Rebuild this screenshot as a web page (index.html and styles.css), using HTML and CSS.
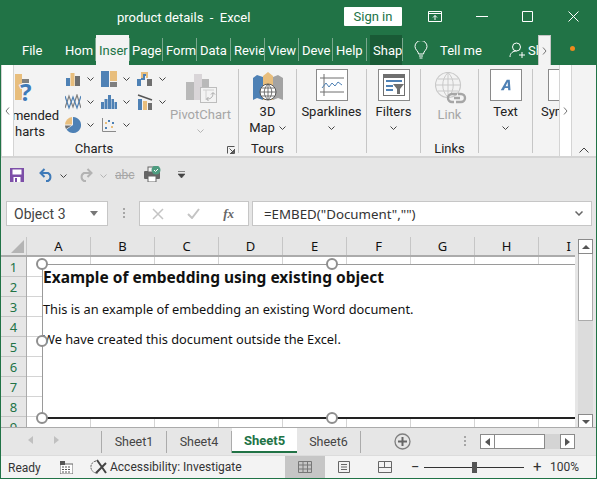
FILE: index.html
```html
<!DOCTYPE html>
<html lang="en">
<head>
  <meta charset="UTF-8" />
  <title>product details - Excel</title>
  <link rel="stylesheet" href="styles.css">
</head>
<body>
<div class="window">

  <!-- title bar -->
  <div class="titlebar">
    <span class="doc-title">product details&nbsp; -&nbsp; Excel</span>
    <button class="signin">Sign in</button>
    <svg class="win-upload" width="14" height="11" viewBox="0 0 14 11"><path d="M.5.5h13v10H.5zM.5 2.500h13M7 9V4.500M5 6.500l2-2 2 2" fill="none" stroke="#fff"/></svg>
    <svg class="win-min" width="12" height="1" viewBox="0 0 12 1"><path d="M0 .5h12" stroke="#fff"/></svg>
    <svg class="win-max" width="11" height="11" viewBox="0 0 11 11"><path d="M.5.5h10v10H.5z" fill="none" stroke="#fff"/></svg>
    <svg class="win-close" width="11" height="11" viewBox="0 0 11 11"><path d="M.5.5l10 10M10.500.5l-10 10" stroke="#fff"/></svg>
  </div>

  <!-- tabs -->
  <div class="tabs">
    <div class="tab tab-file">File</div>
    <div class="tab">Hom</div>
    <div class="tab tab-active">Inser</div>
    <div class="tab">Page</div>
    <div class="tab">Form</div>
    <div class="tab">Data</div>
    <div class="tab">Revie</div>
    <div class="tab">View</div>
    <div class="tab">Deve</div>
    <div class="tab">Help</div>
    <div class="tab tab-shape">Shap</div>
    <svg class="bulb" width="14" height="18" viewBox="0 0 14 18"><path d="M4.500 13c0-3-3.500-4-3.500-7.500a6 6 0 0 1 12 0C13 9 9.500 10 9.500 13zM5 15h4M5.500 17h3" fill="none" stroke="#fff"/></svg>
    <span class="tellme">Tell me</span>
    <svg class="person" width="17" height="17" viewBox="0 0 17 17"><circle cx="7.500" cy="5" r="4" fill="none" stroke="#fff"/><path d="M1 15c0-4 3-6 6.500-6M13 10v6M10 13h6" fill="none" stroke="#fff"/></svg>
    <span class="share">Sh</span>
    <div class="tab-more"><svg width="5" height="8" viewBox="0 0 5 8"><path d="M1 .5 4 4 1 7.500" fill="none" stroke="#777"/></svg></div>
    <span class="orange-dot"></span>
  </div>

  <!-- ribbon -->
  <div class="ribbon">
    <div class="groups">

      <div class="group group-charts">
        <div class="group-items">
          <div class="big-btn btn-rec">
            <svg class="rec-icon" width="21" height="32" viewBox="11 0 21 32"><rect x="12" y="1" width="7" height="26" fill="#e8be7d"/><rect x="19" y="6" width="7" height="4" fill="#7f7f7f"/><text x="17" y="28" class="rec-q">?</text></svg>
            <span class="rec-l1">mended</span>
            <span class="rec-l2">harts</span>
          </div>
          <div class="chart-grid">
            <div class="chart-item">
              <svg width="16" height="16" viewBox="0 0 16 16"><rect x="1" y="7" width="4" height="8" fill="#4e81b5"/><rect x="5.500" y="2" width="4" height="13" fill="#e8be7d"/><rect x="10" y="5" width="5" height="10" fill="#6f6f6f"/></svg>
              <svg class="chev" width="7" height="4" viewBox="0 0 7 4"><path d="M.5.500l3 3 3-3" fill="none" stroke="#444"/></svg>
            </div>
            <div class="chart-item">
              <svg width="16" height="16" viewBox="0 0 16 16"><rect x="0" y="0" width="8" height="16" fill="#4e81b5"/><rect x="9" y="0" width="7" height="10" fill="#e8be7d"/><rect x="9" y="11" width="7" height="5" fill="#7f7f7f"/></svg>
              <svg class="chev" width="7" height="4" viewBox="0 0 7 4"><path d="M.5.500l3 3 3-3" fill="none" stroke="#444"/></svg>
            </div>
            <div class="chart-item">
              <svg width="16" height="16" viewBox="0 0 16 16"><path d="M0 15V8h4v7z" fill="#4e81b5"/><path d="M5 8V2h5v5" fill="none" stroke="#e8be7d" stroke-width="2"/><path d="M10 15V8h5v7z" fill="#6f6f6f"/><path d="M4 8h3V4h2" fill="none" stroke="#4e81b5" stroke-width="2"/></svg>
              <svg class="chev" width="7" height="4" viewBox="0 0 7 4"><path d="M.5.500l3 3 3-3" fill="none" stroke="#444"/></svg>
            </div>
            <div class="chart-item">
              <svg width="16" height="16" viewBox="0 0 16 16"><path d="M0 14 4 2l4 11 4-12 4 13" fill="none" stroke="#7f7f7f" stroke-width="1.200"/><path d="M0 2l4 12 4-11 4 11 4-12" fill="none" stroke="#4e81b5" stroke-width="1.200"/></svg>
              <svg class="chev" width="7" height="4" viewBox="0 0 7 4"><path d="M.5.500l3 3 3-3" fill="none" stroke="#444"/></svg>
            </div>
            <div class="chart-item">
              <svg width="16" height="16" viewBox="0 0 16 16"><rect x="0" y="8" width="3" height="7" fill="#4e81b5"/><rect x="3.500" y="5" width="3" height="10" fill="#4e81b5"/><rect x="7" y="1" width="3" height="14" fill="#4e81b5"/><rect x="10.500" y="5" width="2.500" height="10" fill="#4e81b5"/><rect x="13.500" y="8" width="2.500" height="7" fill="#4e81b5"/></svg>
              <svg class="chev" width="7" height="4" viewBox="0 0 7 4"><path d="M.5.500l3 3 3-3" fill="none" stroke="#444"/></svg>
            </div>
            <div class="chart-item">
              <svg width="16" height="16" viewBox="0 0 16 16"><rect x="1" y="5" width="4" height="11" fill="#4e81b5"/><rect x="6" y="7" width="4" height="9" fill="#e8be7d"/><rect x="11" y="9" width="4" height="7" fill="#6f6f6f"/><path d="M1 1l14 5" stroke="#555" stroke-width="1.500"/></svg>
              <svg class="chev" width="7" height="4" viewBox="0 0 7 4"><path d="M.5.500l3 3 3-3" fill="none" stroke="#444"/></svg>
            </div>
            <div class="chart-item">
              <svg width="16" height="16" viewBox="0 0 16 16"><path d="M8 0a8 8 0 1 1-6.500 12.600L8 8z" fill="#4e81b5"/><path d="M0 7.500A8 8 0 0 1 7 0v7.500z" fill="#e8be7d"/><path d="M0 8.500h6.500L1 12A8 8 0 0 1 0 8.500z" fill="#6f6f6f"/></svg>
              <svg class="chev" width="7" height="4" viewBox="0 0 7 4"><path d="M.5.500l3 3 3-3" fill="none" stroke="#444"/></svg>
            </div>
            <div class="chart-item">
              <svg width="16" height="16" viewBox="0 0 16 16"><path d="M1.500 1v13.500H15" fill="none" stroke="#8a8a8a"/><path d="M4 5h2v2H4zM10 9h2v2h-2z" fill="#e8be7d"/><path d="M7 3h2v2H7zM4 10h2v2H4zM11 5h2v2h-2z" fill="#4e81b5"/></svg>
              <svg class="chev" width="7" height="4" viewBox="0 0 7 4"><path d="M.5.500l3 3 3-3" fill="none" stroke="#444"/></svg>
            </div>
          </div>
          <div class="big-btn btn-pivot is-off">
            <svg class="pivot-icon" width="31" height="30" viewBox="0 0 31 30"><rect x="0" y="9" width="8" height="18" fill="#b9b9b9"/><rect x="8" y="1" width="8" height="26" fill="#d9d5d8"/><rect x="16" y="6" width="7" height="21" fill="#b9b9b9"/><rect x="14.500" y="14.500" width="16" height="15" fill="#f3f3f3" stroke="#bdbdbd"/><path d="M17 17h11M20 17v10" stroke="#d0d0d0"/><path d="M21 26c4 0 6-2 6-6M25 21.500l2-2 2 2M22.500 24l-2 2 2 2" fill="none" stroke="#a8a8a8"/></svg>
            <span>PivotChart</span>
            <svg class="chev" width="7" height="4" viewBox="0 0 7 4"><path d="M.5.500l3 3 3-3" fill="none" stroke="#b5b5b5"/></svg>
          </div>
        </div>
        <div class="group-label label-charts">Charts
          <svg class="launcher" width="8" height="8" viewBox="0 0 8 8"><path d="M.5 7.500v-7h7M7.500 3v4.500H3M2.500 2.500l4 4M6.500 4v2.500H4" fill="none" stroke="#555"/></svg>
        </div>
      </div>

      <div class="group group-tours">
        <div class="group-items">
          <div class="big-btn">
            <svg class="map-icon" width="30" height="29" viewBox="0 0 30 29"><path d="M0 6l4-3 6 2v23l-6-2-4 2z" fill="#4e81b5"/><path d="M10 4l5-4 5 4v24H10z" fill="#e8be7d"/><path d="M20 5l5-2 5 3v22l-5-2-5 2z" fill="#a3a3a3"/><circle cx="15" cy="20" r="8" fill="#fff" stroke="#555"/><path d="M7 20h16M8.500 16h13M8.500 24h13M15 12v16M15 12c-5 5-5 11 0 16M15 12c5 5 5 11 0 16" fill="none" stroke="#555" stroke-width=".8"/></svg>
            <span>3D</span>
            <span class="with-chev">Map <svg class="chev" width="7" height="4" viewBox="0 0 7 4"><path d="M.5.500l3 3 3-3" fill="none" stroke="#444"/></svg></span>
          </div>
        </div>
        <div class="group-label">Tours</div>
      </div>

      <div class="group group-spark">
        <div class="group-items">
          <div class="big-btn btn-box">
            <div class="icon-box">
              <svg width="24" height="22" viewBox="0 0 24 22"><path d="M4 0v22M0 4h24M0 18h24" fill="none" stroke="#6f6f6f"/><path d="M2 14l4-5 3 4 3-4 3 3 3-4 4 3" fill="none" stroke="#4e81b5"/></svg>
            </div>
            <span class="box-text">Sparklines</span>
            <svg class="chev" width="7" height="4" viewBox="0 0 7 4"><path d="M.5.500l3 3 3-3" fill="none" stroke="#444"/></svg>
          </div>
        </div>
      </div>

      <div class="group group-filter">
        <div class="group-items">
          <div class="big-btn btn-box">
            <div class="icon-box">
              <svg width="22" height="22" viewBox="0 0 22 22"><rect x=".5" y=".5" width="21" height="21" fill="#fff" stroke="#6f6f6f"/><rect x="0" y="0" width="22" height="4" fill="#6f6f6f"/><path d="M3 7h16" stroke="#4e81b5" stroke-width="2"/><path d="M3 12h7M3 16h7" stroke="#4e81b5" stroke-width="2"/><path d="M10 10h11l-4 5v5h-3v-5z" fill="#6f6f6f"/></svg>
            </div>
            <span class="box-text">Filters</span>
            <svg class="chev" width="7" height="4" viewBox="0 0 7 4"><path d="M.5.500l3 3 3-3" fill="none" stroke="#444"/></svg>
          </div>
        </div>
      </div>

      <div class="group group-links">
        <div class="group-items">
          <div class="big-btn is-off">
            <svg class="link-icon" width="32" height="32" viewBox="0 0 32 32"><circle cx="13" cy="13" r="12.500" fill="#f3f3f3" stroke="#c9c9c9" stroke-width="1.200"/><path d="M.5 13h25M3 7h20M3 19h20M13 .5v25M13 .5c-7 7-7 18 0 25M13 .5c7 7 7 18 0 25" fill="none" stroke="#c9c9c9"/><path d="M19 30h-2a4 4 0 0 1 0-8h5M23 22h3a4 4 0 0 1 0 8h-5M19 26h6" fill="none" stroke="#a6a6a6" stroke-width="2.400"/></svg>
            <span>Link</span>
          </div>
        </div>
        <div class="group-label">Links</div>
      </div>

      <div class="group group-text">
        <div class="group-items">
          <div class="big-btn btn-box">
            <div class="icon-box">
              <svg width="12" height="12" viewBox="0 0 16 16"><path d="M1 15 9 1h4l1 14h-3l-.300-3H6.500l-1.500 3zM7.500 9.500h3L10.200 4z" fill="#4e81b5" fill-rule="evenodd"/></svg>
            </div>
            <span class="box-text">Text</span>
            <svg class="chev" width="7" height="4" viewBox="0 0 7 4"><path d="M.5.500l3 3 3-3" fill="none" stroke="#444"/></svg>
          </div>
        </div>
      </div>

      <div class="group group-sym">
        <div class="icon-box sym-box"></div>
        <span class="box-text sym-text">Sym</span>
      </div>
    </div>

    <div class="ribbon-strip strip-left"><svg width="5" height="8" viewBox="0 0 5 8"><path d="M4 .5 1 4l3 3.500" fill="none" stroke="#777"/></svg></div>
    <div class="ribbon-strip strip-right"><svg width="5" height="8" viewBox="0 0 5 8"><path d="M1 .5 4 4 1 7.500" fill="none" stroke="#777"/></svg></div>
    <svg class="ribbon-collapse" width="10" height="6" viewBox="0 0 10 6"><path d="M.5 5.500 5 1l4.500 4.500" fill="none" stroke="#444"/></svg>
  </div>

  <!-- quick access -->
  <div class="qat">
    <svg class="qat-save" width="14" height="14" viewBox="0 0 14 14"><path d="M0 0h14v14H0z" fill="#7d4fa8"/><rect x="2.500" y="1.500" width="9" height="5" fill="#fff"/><rect x="3.500" y="9" width="7" height="5" fill="#fff"/><rect x="5" y="10" width="2" height="4" fill="#7d4fa8"/></svg>
    <svg class="qat-undo" width="15" height="14" viewBox="0 0 15 14"><path d="M5.500 1 1.500 5l4 4M2 5h7a4.500 4.500 0 0 1 0 8H7" fill="none" stroke="#3f7ab8" stroke-width="2"/></svg>
    <svg class="chev qat-c1" width="7" height="4" viewBox="0 0 7 4"><path d="M.5.500l3 3 3-3" fill="none" stroke="#444"/></svg>
    <svg class="qat-redo" width="15" height="14" viewBox="0 0 15 14"><path d="M9.500 1l4 4-4 4M13 5H6a4.500 4.500 0 0 0 0 8h2" fill="none" stroke="#b3b3b3" stroke-width="2"/></svg>
    <svg class="chev qat-c2" width="7" height="4" viewBox="0 0 7 4"><path d="M.5.500l3 3 3-3" fill="none" stroke="#b3b3b3"/></svg>
    <span class="qat-abc">abc</span>
    <svg class="qat-print" width="17" height="16" viewBox="0 0 17 16"><rect x="0" y="5" width="16" height="8" rx="1" fill="#666"/><rect x="4" y="1" width="7" height="5" fill="#f3f3f3" stroke="#666"/><rect x="4" y="10" width="8" height="6" fill="#fff" stroke="#666"/><circle cx="12" cy="4" r="4.500" fill="#4f9c80"/><path d="M10 4l1.500 1.500L14 3" fill="none" stroke="#fff"/></svg>
    <svg class="qat-custom" width="7" height="7" viewBox="0 0 7 7"><path d="M0 .5h7M0 3h7l-3.500 4z" fill="#444" stroke="#444" stroke-width=".6"/></svg>
  </div>

  <!-- formula bar -->
  <div class="formula-row">
    <div class="name-box"><span>Object 3</span><i class="caret-down"></i></div>
    <div class="grip"></div>
    <div class="fx-box">
      <svg width="12" height="12" viewBox="0 0 12 12"><path d="M1 1l10 10M11 1 1 11" stroke="#c4c4c4" stroke-width="1.500"/></svg>
      <svg width="13" height="11" viewBox="0 0 13 11"><path d="M1 6l4 4 7-9" fill="none" stroke="#c4c4c4" stroke-width="2"/></svg>
      <span class="fx">fx</span>
    </div>
    <div class="formula-input"><span>=EMBED("Document","")</span>
      <svg width="8" height="5" viewBox="0 0 8 5"><path d="M.5.500 4 4 7.500.5" fill="none" stroke="#666" stroke-width="1.500"/></svg>
    </div>
  </div>

  <!-- sheet -->
  <div class="sheet-area">
    <div class="sheet-main">
      <div class="col-heads">
        <div class="corner"><i></i></div>
        <div class="col">A</div><div class="col">B</div><div class="col">C</div>
        <div class="col">D</div><div class="col">E</div><div class="col">F</div>
        <div class="col">G</div><div class="col">H</div><div class="col col-cut">I</div>
      </div>
      <div class="sheet-body">
        <div class="row-heads">
          <div class="row">1</div><div class="row">2</div><div class="row">3</div>
          <div class="row">4</div><div class="row">5</div><div class="row">6</div>
          <div class="row">7</div><div class="row">8</div><div class="row">9</div>
        </div>
        <div class="cells"></div>
        <div class="ole-object">
          <h2>Example of embedding using existing object</h2>
          <p>This is an example of embedding an existing Word document.</p>
          <p>We have created this document outside the Excel.</p>
          <i class="handle h-tl"></i><i class="handle h-tm"></i><i class="handle h-ml"></i>
          <i class="handle h-bl"></i><i class="handle h-bm"></i>
        </div>
      </div>
    </div>
    <div class="vscroll">
      <div class="sb-btn"><i class="tri-up"></i></div>
      <div class="sb-thumb"></div>
      <div class="sb-track"></div>
      <div class="sb-btn"><i class="tri-down"></i></div>
    </div>
  </div>

  <!-- sheet tabs -->
  <div class="sheet-tabs">
    <div class="tab-nav">
      <i class="tri-left"></i><i class="tri-right"></i>
    </div>
    <div class="stab">Sheet1</div>
    <div class="stab">Sheet4</div>
    <div class="stab stab-active">Sheet5</div>
    <div class="stab stab-last">Sheet6</div>
    <svg class="add-sheet" width="17" height="17" viewBox="0 0 17 17"><circle cx="8.500" cy="8.500" r="7.500" fill="none" stroke="#7f7f7f" stroke-width="1.300"/><path d="M8.500 4v9M4 8.500h9" stroke="#666" stroke-width="2"/></svg>
    <div class="grip grip-tabs"></div>
    <div class="hscroll">
      <div class="sb-btn"><i class="tri-left dark"></i></div>
      <div class="hs-thumb"></div>
      <div class="hs-track"></div>
      <div class="sb-btn"><i class="tri-right dark"></i></div>
    </div>
  </div>

  <!-- status bar -->
  <div class="statusbar">
    <span class="ready">Ready</span>
    <svg class="macro" width="13" height="13" viewBox="0 0 13 13"><rect x="0" y="3" width="13" height="10" fill="#fff" stroke="#666"/><rect x="0" y="0" width="5" height="4" fill="#555"/><path d="M2 6h9M2 8.500h9M2 11h9" stroke="#555" stroke-dasharray="2 1"/></svg>
    <svg class="access" width="17" height="16" viewBox="0 0 17 16"><path d="M6 2a6 6 0 1 0 2 12" fill="none" stroke="#555" stroke-dasharray="2 1"/><path d="M7 1l9 13M16 4 6 14" stroke="#444" stroke-width="2"/></svg>
    <span class="access-text">Accessibility: Investigate</span>
    <div class="view-btn">
      <svg width="14" height="12" viewBox="0 0 14 12"><path d="M.5.500h13v11H.5zM.5 4h13M.5 8h13M5 .5v11M9.500.5v11" fill="none" stroke="#777"/></svg>
    </div>
    <svg class="view-page" width="12" height="12" viewBox="0 0 12 12"><path d="M.5.500h11v11H.5zM3 3.500h6M3 6h6M3 8.500h6" fill="none" stroke="#666"/></svg>
    <svg class="view-break" width="14" height="12" viewBox="0 0 14 12"><path d="M.5.500h13v11H.5zM.5 6.500h13M6.500.5v6" fill="none" stroke="#666"/></svg>
    <span class="zoom-sign zoom-minus">−</span>
    <div class="zoom-track"><i></i></div>
    <span class="zoom-sign zoom-plus">+</span>
    <span class="zoom-pct">100%</span>
  </div>
</div>
</body>
</html>
```

FILE: styles.css
```css
* {
  box-sizing: border-box;
}

body {
  margin: 0;
  overflow: hidden;
  font-family: Roboto, "Noto Sans", Arial, sans-serif;
  font-size: 13px;
  color: #222;
}

svg {
  display: block;
  flex: none;
}

.window {
  width: 597px;
  height: 479px;
  display: flex;
  flex-direction: column;
  background: #e6e6e6;
  border: 1px solid #217346;
  border-top: 0;
  overflow: hidden;
}

/* title bar */
.titlebar {
  height: 35px;
  flex: none;
  display: flex;
  align-items: center;
  background: #217346;
  color: #fff;
}

.doc-title {
  margin-left: 116px;
  width: 227px;
  font-size: 13px;
}

.signin {
  width: 58px;
  height: 19px;
  margin-top: -2px;
  padding: 0;
  border: 0;
  border-radius: 1px;
  background: #fff;
  color: #217346;
  font: 13px Roboto, sans-serif;
}

.win-upload { margin: -3px 0 0 26px; }
.win-min { margin: -3px 0 0 34px; }
.win-max { margin: -3px 0 0 34px; }
.win-close { margin: -3px 0 0 35px; }

/* ribbon tabs */
.tabs {
  height: 30px;
  flex: none;
  display: flex;
  align-items: center;
  background: #217346;
  color: #fff;
}

.tab {
  width: 34px;
  height: 30px;
  padding: 6px 0 0 3px;
  white-space: nowrap;
  font-size: 13px;
  line-height: 19px;
  position: relative;
}

.tab::after {
  content: "";
  position: absolute;
  right: 0;
  top: 3px;
  bottom: 4px;
  width: 1px;
  background: #7aa88e;
}

.tab:first-child::after {
  display: none;
}

.tab-file {
  width: 61px;
  padding-left: 21px;
}

.tab-active {
  background: #f3f3f3;
  color: #217346;
  width: 33px;
}

.tab-active::after {
  right: -1px;
}

.tab-shape {
  width: 32px;
  margin-left: 3px;
  background: #195a36;
}

.tab-shape::after {
  right: -1px;
}

.bulb { margin-left: 12px; }

.tellme {
  margin-left: 12px;
  width: 38px;
  white-space: nowrap;
}

.person { margin-left: 31px; }

.share {
  width: 10px;
  margin-left: 2px;
}

.tab-more {
  width: 13px;
  height: 30px;
  display: flex;
  align-items: center;
  justify-content: center;
  background: #f3f3f3;
  border: 1px solid #c6c6c6;
  border-bottom: 0;
}

.orange-dot {
  width: 5px;
  height: 5px;
  margin: -3px 0 0 19px;
  border-radius: 50%;
  background: #ee8a1d;
}

/* ribbon */
.ribbon {
  height: 93px;
  flex: none;
  position: relative;
  overflow: hidden;
  background: #f3f3f3;
  border-bottom: 2px solid #d4d4d4;
}

.groups {
  display: flex;
  margin-left: 13px;
}

.group {
  height: 84px;
  margin-top: 4px;
  display: flex;
  flex-direction: column;
  flex: none;
  border-right: 1px solid #c6c6c6;
}

.group-items {
  flex: 1;
  display: flex;
}

.group-label {
  height: 16px;
  margin-bottom: -4px;
  position: relative;
  text-align: center;
  line-height: 16px;
}

.label-charts {
  padding-right: 64px;
}

.launcher {
  position: absolute;
  right: 3px;
  top: 5px;
}

.group-charts { width: 225px; }
.group-tours { width: 58px; }
.group-spark { width: 70px; }
.group-filter { width: 54px; }
.group-links { width: 58px; }
.group-text { width: 54px; }
.group-sym { width: 26px; border: 0; }

.big-btn {
  display: flex;
  flex-direction: column;
  align-items: center;
  width: 100%;
  line-height: 16px;
  white-space: nowrap;
}

.btn-rec {
  width: 46px;
}

.rec-icon {
  margin-top: 4px;
  margin-bottom: 3px;
  align-self: flex-start;
}

.rec-l1 {
  align-self: flex-end;
  padding-right: 1px;
}

.rec-l2 {
  align-self: flex-start;
  margin-left: 1px;
}

.rec-q {
  font: bold 24px "Noto Sans", sans-serif;
  fill: #3f7ab8;
  stroke: #f3f3f3;
  stroke-width: 2px;
  paint-order: stroke;
}

.chart-grid {
  width: 108px;
  margin: -2px 0 0 4px;
  display: grid;
  grid-template-columns: repeat(3, 36px);
  grid-template-rows: repeat(3, 23px);
}

.chart-item {
  display: flex;
  align-items: center;
  gap: 6px;
  padding-left: 1px;
}

.btn-pivot {
  width: 57px;
  margin-right: 9px;
}

.pivot-icon {
  margin: 4px 0 4px 2px;
}

.is-off {
  color: #a6a6a6;
}

.btn-pivot .chev {
  margin-top: 6px;
}

.map-icon {
  margin-top: 3px;
  margin-bottom: 3px;
}

.with-chev {
  display: flex;
  align-items: center;
  gap: 4px;
}

.icon-box {
  width: 32px;
  height: 32px;
  flex: none;
  display: flex;
  align-items: center;
  justify-content: center;
  background: #fff;
  border: 1.500px solid #8a8a8a;
}

.box-text {
  margin-top: 3px;
  line-height: 16px;
}

.btn-box .chev {
  margin-top: 6px;
}

.link-icon {
  margin-top: 3px;
  margin-bottom: 3px;
  margin-left: 3px;
}

.sym-box {
  width: 11px;
  margin-left: 15px;
  border-right: 0;
}

.sym-text {
  margin-left: 8px;
}

.ribbon-strip {
  position: absolute;
  top: 0;
  bottom: 0;
  display: flex;
  align-items: center;
  background: #fff;
  justify-content: center;
  width: 13px;
  border: 1px solid #d4d4d4;
  border-top: 0;
  border-bottom: 0;
}

.strip-left { left: 0; }
.strip-right { left: 558px; }

.ribbon-collapse {
  position: absolute;
  left: 578px;
  top: 82px;
}

/* quick access */
.qat {
  height: 43px;
  flex: none;
  display: flex;
  align-items: flex-start;
  padding-top: 10px;
  color: #a6a6a6;
}

.qat-save { margin-left: 9px; }
.qat-undo { margin-left: 15px; }
.qat-c1 { margin: 6px 0 0 6px; }
.qat-redo { margin-left: 11px; }
.qat-c2 { margin: 6px 0 0 7px; }

.qat-abc {
  margin-left: 8px;
  width: 17px;
  font-size: 12px;
  line-height: 14px;
  text-decoration: line-through;
}

.qat-print { margin: -2px 0 0 12px; }
.qat-custom { margin: 3px 0 0 17px; }

/* formula bar */
.formula-row {
  height: 25px;
  flex: none;
  display: flex;
  padding-left: 5px;
}

.name-box {
  width: 102px;
  display: flex;
  align-items: center;
  justify-content: space-between;
  padding: 0 9px 0 7px;
  background: #fff;
  border: 1px solid #c6c6c6;
  color: #444;
  font-size: 14px;
}

.caret-down {
  border: 4px solid transparent;
  border-top: 5px solid #777;
  border-bottom: 0;
}

.grip {
  width: 2px;
  height: 11px;
  margin: 7px 14px 0 15px;
  background: repeating-linear-gradient(#a6a6a6 0 2px, transparent 2px 4px);
}

.fx-box {
  width: 110px;
  display: flex;
  align-items: center;
  justify-content: space-between;
  padding: 0 14px 0 12px;
  background: #fff;
  border: 1px solid #c6c6c6;
}

.fx {
  font: italic bold 13px "Liberation Serif", serif;
  color: #666;
}

.formula-input {
  width: 340px;
  margin-left: 3px;
  display: flex;
  align-items: center;
  justify-content: space-between;
  padding: 0 8px 0 11px;
  background: #fff;
  border: 1px solid #c6c6c6;
  font-family: "Noto Sans", sans-serif;
  font-size: 13.300px;
  color: #333;
}

/* sheet */
.sheet-area {
  flex: 1;
  display: flex;
  margin-top: 11px;
  min-height: 0;
}

.sheet-main {
  width: 574px;
  flex: none;
}

.col-heads {
  height: 20px;
  display: flex;
  border-bottom: 2px solid #ababab;
}

.corner {
  width: 26px;
  flex: none;
  border-right: 1px solid #c6c6c6;
}

.corner i {
  display: block;
  width: 0;
  height: 0;
  margin: 3px 0 0 10px;
  border-left: 13px solid transparent;
  border-bottom: 13px solid #b4b4b4;
}

.col {
  width: 64px;
  flex: none;
  text-align: center;
  line-height: 18px;
  border-right: 1px solid #c6c6c6;
  color: #111;
  font-family: "Noto Sans", sans-serif;
}

.col-cut {
  width: 36px;
  padding-right: 4px;
  text-align: right;
  border: 0;
}

.sheet-body {
  height: 171px;
  display: flex;
  position: relative;
  overflow: hidden;
}

.row-heads {
  width: 26px;
  flex: none;
  border-right: 1px solid #ababab;
  font-family: "Noto Sans", sans-serif;
}

.row {
  height: 20px;
  text-align: center;
  line-height: 20px;
  border-bottom: 1px solid #c6c6c6;
  color: #217346;
  font-size: 13px;
}

.cells {
  flex: 1;
  background-color: #fff;
  background-image:
    linear-gradient(90deg, transparent 63px, #d4d4d4 63px),
    linear-gradient(transparent 19px, #d4d4d4 19px);
  background-size: 64px 20px;
}

.ole-object {
  position: absolute;
  left: 41px;
  top: 7px;
  width: 560px;
  height: 155px;
  background: #fff;
  border-top: 1px solid #9a9a9a;
  border-left: 1px solid #9a9a9a;
  border-bottom: 2px solid #222;
  font-family: "Noto Sans", sans-serif;
  font-size: 12.800px;
  color: #111;
}

.ole-object h2 {
  margin: 0 0 11px;
  font-size: 15.500px;
  line-height: 24px;
}

.ole-object p {
  margin: 0 0 12px;
  line-height: 18px;
}

.handle {
  position: absolute;
  width: 12px;
  height: 12px;
  background: #fff;
  border: 2px solid #8f8f8f;
  border-radius: 50%;
}

.h-tl { left: -7px; top: -7px; }
.h-tm { left: 283px; top: -7px; }
.h-ml { left: -7px; top: 70px; }
.h-bl { left: -7px; top: 147px; }
.h-bm { left: 283px; top: 147px; }

.vscroll {
  width: 15px;
  margin: 2px 0 0 3px;
  display: flex;
  flex-direction: column;
  flex: none;
  height: 190px;
}

.sb-btn {
  width: 15px;
  height: 15px;
  flex: none;
  display: flex;
  align-items: center;
  justify-content: center;
  background: #fff;
  border: 1px solid #8a8a8a;
}

.sb-thumb {
  height: 67px;
  background: #fff;
  border: 1px solid #ababab;
  border-top: 0;
}

.sb-track {
  flex: 1;
  background: #dcdcdc;
}

.tri-up, .tri-down, .tri-left, .tri-right {
  display: block;
  width: 0;
  height: 0;
  border: 4px solid transparent;
}

.tri-up { border-bottom: 4px solid #555; border-top: 0; }
.tri-down { border-top: 4px solid #555; border-bottom: 0; }

/* sheet tabs */
.sheet-tabs {
  height: 28px;
  flex: none;
  display: flex;
  align-items: flex-start;
  border-top: 1px solid #ababab;
  margin-top: -1px;
  background: #e6e6e6;
  position: relative;
}

.tab-nav {
  width: 101px;
  height: 22px;
  margin-top: 3px;
  display: flex;
  padding: 5px 0 0 27px;
  gap: 21px;
  border-right: 1px solid #ababab;
}

.tri-left { border-right: 5px solid #c0c0c0; border-left: 0; }
.tri-right { border-left: 5px solid #c0c0c0; border-right: 0; }
.tri-left.dark { border-right-color: #555; }
.tri-right.dark { border-left-color: #555; }

.stab {
  width: 65px;
  height: 22px;
  margin-top: 3px;
  text-align: center;
  line-height: 22px;
  color: #444;
  font-size: 12.500px;
  border-right: 1px solid #ababab;
}

.stab-active {
  height: 25px;
  margin-top: 0;
  line-height: 25px;
  border: 0;
  border-bottom: 2px solid #217346;
  background: #fff;
  color: #217346;
  font-size: 13px;
  font-weight: bold;
}

.stab-last {
  width: 64px;
}

.add-sheet {
  margin: 5px 0 0 33px;
}

.grip-tabs {
  margin: 8px 0 0 53px;
}

.hscroll {
  width: 95px;
  margin: 6px 0 0 14px;
  display: flex;
}

.hs-thumb {
  width: 50px;
  height: 15px;
  background: #fff;
  border: 1px solid #8a8a8a;
  border-left: 0;
}

.hs-track {
  flex: 1;
  background: #d4d4d4;
}

/* status bar */
.statusbar {
  height: 23px;
  flex: none;
  display: flex;
  align-items: center;
  background: #f3f3f3;
  color: #333;
  font-size: 12px;
  border-top: 1px solid #dcdcdc;
}

.ready { margin: 1px 0 0 7px; width: 52px; }
.access { margin-left: 17px; }

.access-text {
  margin-left: 3px;
  width: 175px;
  white-space: nowrap;
}

.view-btn {
  width: 40px;
  height: 22px;
  display: flex;
  align-items: center;
  justify-content: center;
  background: #c6c6c6;
}

.view-page { margin-left: 13px; }
.view-break { margin-left: 28px; }

.zoom-sign {
  width: 8px;
  font-size: 15px;
  line-height: 1;
  text-align: center;
}

.zoom-minus { margin: 0 5px 0 19px; }
.zoom-plus { margin-left: 9px; }

.zoom-track {
  width: 100px;
  height: 1px;
  position: relative;
  background: #333;
}

.zoom-track i {
  position: absolute;
  left: 48px;
  top: -5px;
  width: 5px;
  height: 11px;
  background: #555;
}

.zoom-pct {
  margin-left: 9px;
}
```
